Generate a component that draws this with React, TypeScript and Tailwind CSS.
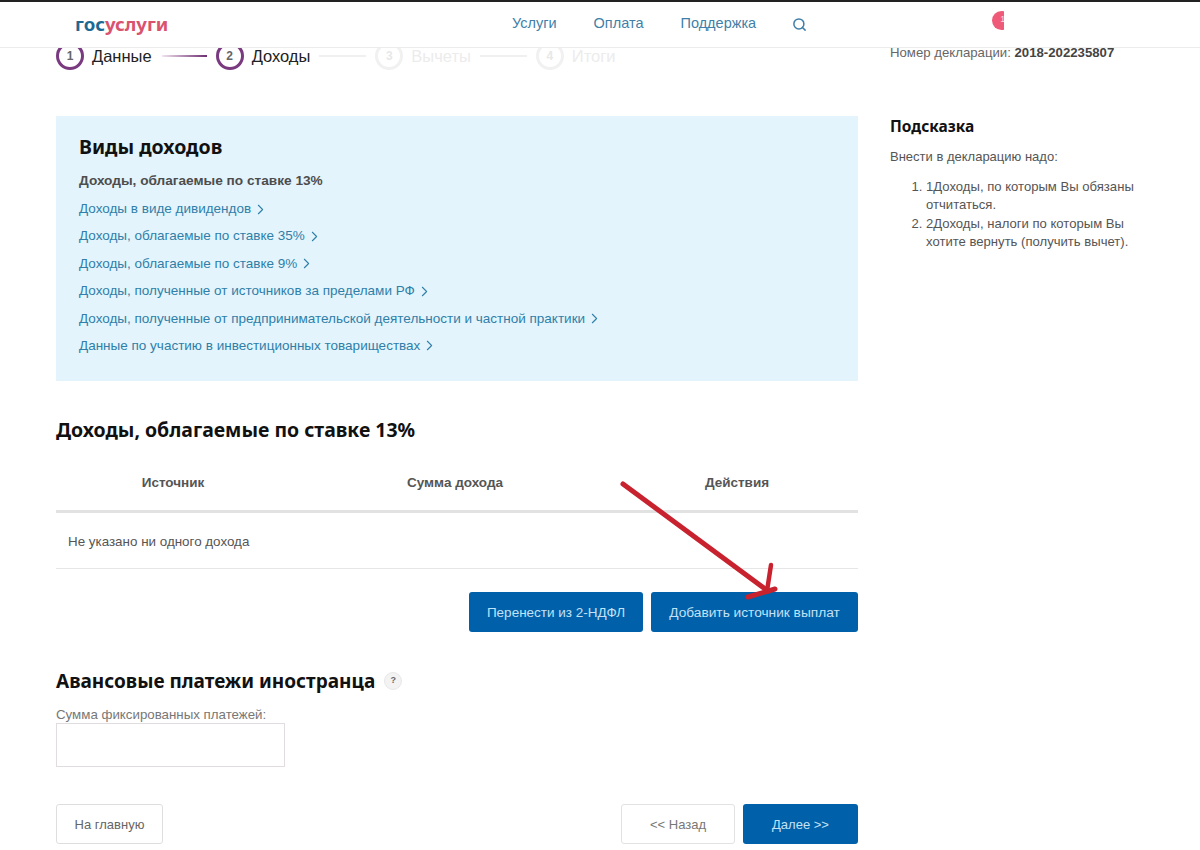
import React from "react";
import { ChevronRight, Search } from "lucide-react";

const links = [
  "Доходы в виде дивидендов",
  "Доходы, облагаемые по ставке 35%",
  "Доходы, облагаемые по ставке 9%",
  "Доходы, полученные от источников за пределами РФ",
  "Доходы, полученные от предпринимательской деятельности и частной практики",
  "Данные по участию в инвестиционных товариществах",
];

function Step({ n, label, active }: { n: number; label: string; active?: boolean }) {
  return (
    <div className="flex items-center gap-[8px]">
      <div
        className={
          active
            ? "flex h-[28px] w-[28px] items-center justify-center rounded-full border-[3px] border-[#7a3a80] text-[12px] font-bold text-[#666]"
            : "flex h-[28px] w-[28px] items-center justify-center rounded-full border-[3px] border-[#f1f1f1] text-[12px] font-bold text-[#e8e8e8]"
        }
      >
        {n}
      </div>
      <span className={active ? "text-[16.5px] text-[#222]" : "text-[16.5px] text-[#ececec]"}>{label}</span>
    </div>
  );
}

export default function App() {
  return (
    <div className="relative h-[850px] w-[1200px] overflow-hidden bg-white font-['Liberation_Sans',sans-serif]">
      <header className="relative z-10 flex h-[48px] items-center border-t-2 border-b border-t-[#222] border-b-[#ececec] bg-white pb-[1px]">
        <div className="ml-[75px] w-[437px] font-['Noto_Sans',sans-serif] text-[18.6px] leading-none font-bold">
          <span className="text-[#1b6a94]">гос</span>
          <span className="text-[#d9536f]">услуги</span>
        </div>
        <nav className="flex items-center gap-[37px] text-[14.5px] text-[#3f7fa8]">
          <span>Услуги</span>
          <span>Оплата</span>
          <span>Поддержка</span>
        </nav>
        <Search className="ml-[36px] text-[#3f7fa8]" size={15} strokeWidth={2.4} />
        <div className="mb-[8px] ml-[185px] h-[19px] w-[12px] overflow-hidden">
          <div className="flex h-[19px] w-[19px] items-center justify-center rounded-full bg-[#ee5a78] pl-[2px] text-[9px] text-[#ffd5dd]">1</div>
        </div>
      </header>

      <main className="mt-[-6px] flex items-start">
        <div className="ml-[56px] w-[802px]">
          <div className="flex h-[28px] items-center">
            <Step n={1} label="Данные" active />
            <div className="mr-[9px] ml-[10px] h-[2px] w-[45px] bg-gradient-to-r from-[#f1e4f1] to-[#6d2f70]" />
            <Step n={2} label="Доходы" active />
            <div className="mx-[9px] h-[2px] w-[47px] bg-[#f0f0f0]" />
            <Step n={3} label="Вычеты" />
            <div className="mx-[9px] h-[2px] w-[47px] bg-[#f0f0f0]" />
            <Step n={4} label="Итоги" />
          </div>

          <section className="mt-[46px] h-[265px] bg-[#e3f4fc] pt-[19px] pl-[23px]">
            <h2 className="font-['Noto_Sans',sans-serif] text-[19.5px] leading-[24px] font-bold text-[#111]">Виды доходов</h2>
            <p className="mt-[13px] text-[13.65px] leading-[18px] font-bold text-[#4d4d4d]">Доходы, облагаемые по ставке 13%</p>
            <ul className="mt-[10px] flex flex-col gap-[9.4px] text-[13.5px] leading-[18px] text-[#2f7fa9]">
              {links.map((l) => (
                <li key={l} className="flex items-center gap-[1px]">
                  {l}
                  <ChevronRight size={17} strokeWidth={1.5} />
                </li>
              ))}
            </ul>
          </section>

          <h2 className="mt-[35px] font-['Noto_Sans',sans-serif] text-[19.45px] leading-[28px] font-bold text-[#111]">Доходы, облагаемые по ставке 13%</h2>

          <div className="mt-[12px] grid h-[57px] grid-cols-[234px_330px_234px] items-center border-b-[3px] border-[#e2e2e2] text-center text-[13.5px] font-bold text-[#555]">
            <span>Источник</span>
            <span>Сумма дохода</span>
            <span>Действия</span>
          </div>
          <div className="flex h-[56px] items-center border-b border-[#e6e6e6] pt-[4px] pl-[12px] text-[13.4px] text-[#555]">Не указано ни одного дохода</div>

          <div className="mt-[23px] flex justify-end gap-[8px]">
            <button className="h-[40px] w-[174px] rounded-[3px] bg-[#0060a9] pt-[2px] text-[13.5px] text-[#c2e2f7]">Перенести из 2-НДФЛ</button>
            <button className="h-[40px] w-[207px] rounded-[3px] bg-[#0060a9] pt-[2px] text-[13.7px] text-[#c2e2f7]">Добавить источник выплат</button>
          </div>

          <div className="mt-[35px] flex items-center gap-[9px]">
            <h2 className="font-['Noto_Sans',sans-serif] text-[19px] leading-[28px] font-bold text-[#111]">Авансовые платежи иностранца</h2>
            <div className="flex h-[18px] w-[18px] items-center justify-center rounded-full border border-[#e8e8e8] bg-[#f3f3f3] text-[9px] font-bold text-[#666]">?</div>
          </div>
          <label className="mt-[12px] mb-[1px] block text-[13.3px] leading-[15px] text-[#777]">Сумма фиксированных платежей:</label>
          <div className="h-[44px] w-[229px] border border-[#e0dce0] bg-white" />

          <div className="mt-[37px] flex items-center">
            <button className="h-[40px] w-[107px] rounded-[3px] border border-[#dedede] bg-white pt-[1px] text-[13px] text-[#666]">На главную</button>
            <button className="ml-auto h-[40px] w-[114px] rounded-[3px] border border-[#e2e2e2] bg-white pt-[1px] text-[13px] text-[#777]">&lt;&lt; Назад</button>
            <button className="ml-[8px] h-[40px] w-[115px] rounded-[3px] bg-[#0060a9] pt-[1px] text-[13px] text-[#c2e2f7]">Далее &gt;&gt;</button>
          </div>
        </div>

        <aside className="ml-[32px] w-[250px] pt-[3px]">
          <p className="text-[13.2px] leading-[15px] text-[#666]">
            Номер декларации: <b className="text-[#444]">2018-202235807</b>
          </p>
          <h3 className="mt-[56px] font-['Noto_Sans',sans-serif] text-[15.5px] leading-[20px] font-bold text-[#111]">Подсказка</h3>
          <p className="mt-[12px] text-[13px] leading-[18px] text-[#555]">Внести в декларацию надо:</p>
          <ol className="mt-[12px] list-decimal pl-[36px] text-[13.1px] leading-[18.4px] text-[#555]">
            <li>1Доходы, по которым Вы обязаны отчитаться.</li>
            <li>2Доходы, налоги по которым Вы хотите вернуть (получить вычет).</li>
          </ol>
        </aside>
      </main>

      <svg className="pointer-events-none absolute top-0 left-0 z-20" width="1200" height="850" fill="none">
        <path d="M623 484 L768 591" stroke="#c8222f" strokeWidth="5" strokeLinecap="round" />
        <path d="M771 565 L767 591" stroke="#c8222f" strokeWidth="4.5" strokeLinecap="round" />
        <path d="M748 597 L775 589" stroke="#c8222f" strokeWidth="5" strokeLinecap="round" />
      </svg>
    </div>
  );
}
